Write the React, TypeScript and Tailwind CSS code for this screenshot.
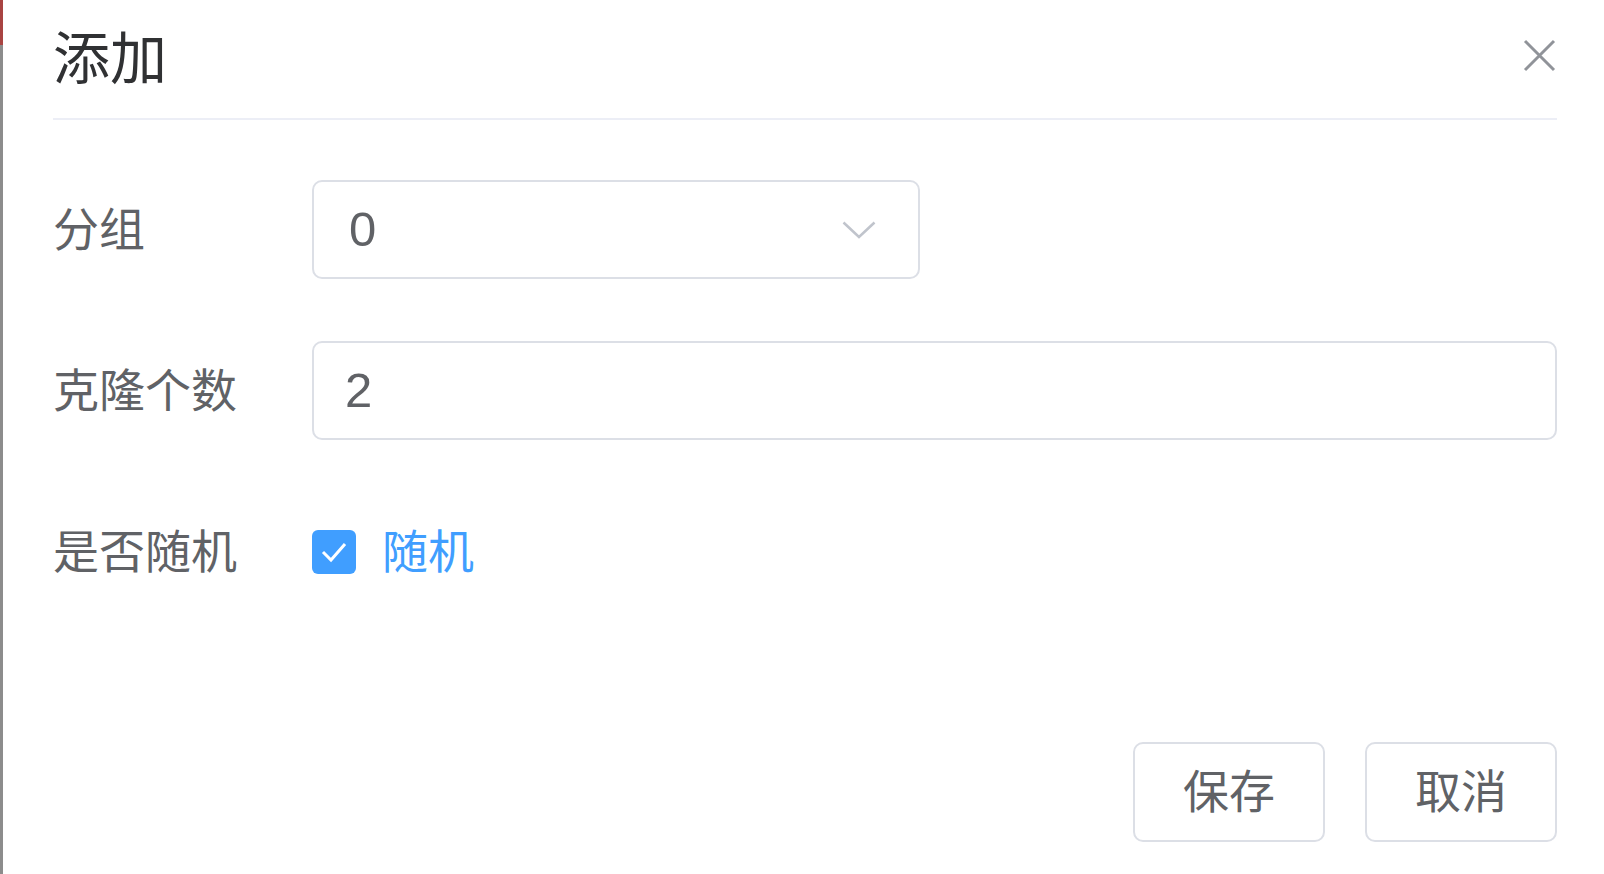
export default function App() {
  const font = { fontFamily: '"Liberation Sans", "Noto Sans CJK SC", sans-serif' };
  return (
    <div className="flex h-[874px] w-[1604px] overflow-hidden bg-white" style={font}>
      {/* left edge of page behind the dialog */}
      <div className="flex w-[3px] flex-col">
        <div className="h-[45px] bg-[#a94442]" />
        <div className="flex-1 bg-[#8c8c8c]" />
      </div>

      <div className="flex flex-1 flex-col pl-[50px] pr-[47px]">
        {/* Header */}
        <div className="flex h-[118px] items-center justify-between">
          <span className="text-[57px] leading-none text-[#303133]">添加</span>
          <svg width="33" height="33" viewBox="0 0 33 33" className="mb-[7px] mr-[1px]">
            <path d="M2 2 L31 31 M31 2 L2 31" stroke="#909399" strokeWidth="3" fill="none" />
          </svg>
        </div>
        <div className="h-[2px] bg-[#eceef6]" />

        {/* 分组 */}
        <div className="mt-[60px] flex h-[99px] items-center">
          <span className="w-[259px] text-[46px] leading-none text-[#606266]">分组</span>
          <div className="flex h-[99px] w-[608px] items-center justify-between rounded-[10px] border-2 border-[#dcdfe6] pl-[35px] pr-[42px]">
            <span className="text-[49px] leading-none text-[#606266]">0</span>
            <svg width="34" height="18" viewBox="0 0 34 18">
              <polyline points="1.5,1.5 17,16 32.5,1.5" stroke="#c0c4cc" strokeWidth="2.5" fill="none" />
            </svg>
          </div>
        </div>

        {/* 克隆个数 */}
        <div className="mt-[62px] flex h-[99px] items-center">
          <span className="w-[259px] text-[46px] leading-none text-[#606266]">克隆个数</span>
          <div className="flex h-[99px] flex-1 items-center rounded-[10px] border-2 border-[#dcdfe6] pl-[31px]">
            <span className="text-[49px] leading-none text-[#606266]">2</span>
          </div>
        </div>

        {/* 是否随机 */}
        <div className="mt-[62px] flex h-[99px] items-center">
          <span className="w-[259px] text-[46px] leading-none text-[#606266]">是否随机</span>
          <div className="flex items-center gap-[26px]">
            <div className="flex h-[44px] w-[44px] items-center justify-center rounded-[6px] bg-[#409eff]">
              <svg width="28" height="22" viewBox="0 0 28 22">
                <polyline points="3,11 11,19 25,3" stroke="#ffffff" strokeWidth="3" fill="none" />
              </svg>
            </div>
            <span className="text-[46px] leading-none text-[#409eff]">随机</span>
          </div>
        </div>

        {/* Footer buttons */}
        <div className="mt-[141px] flex justify-end gap-[40px]">
          <button
            type="button"
            className="flex h-[100px] w-[192px] items-center justify-center rounded-[10px] border-2 border-[#dcdfe6] bg-white text-[46px] leading-none text-[#606266]"
          >
            保存
          </button>
          <button
            type="button"
            className="flex h-[100px] w-[192px] items-center justify-center rounded-[10px] border-2 border-[#dcdfe6] bg-white text-[46px] leading-none text-[#606266]"
          >
            取消
          </button>
        </div>
      </div>
    </div>
  );
}
